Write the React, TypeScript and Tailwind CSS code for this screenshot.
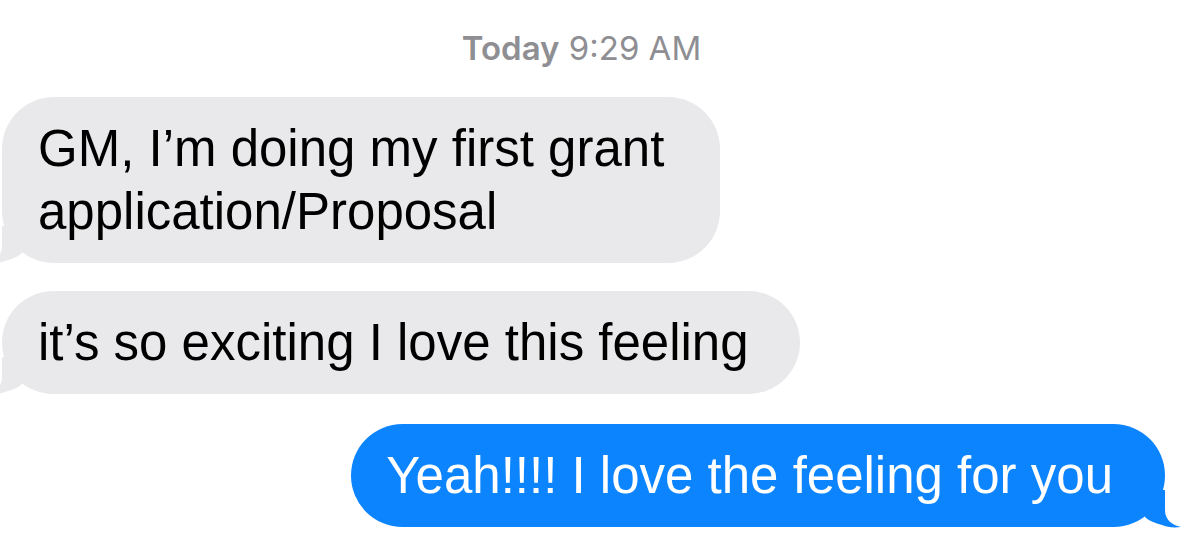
function Tail({ side, color }: { side: "left" | "right"; color: string }) {
  const pos =
    side === "right"
      ? "-right-[19px]"
      : "-left-[19px] -scale-x-100";
  return (
    <svg
      className={`absolute -bottom-[3px] h-[40px] w-[44px] ${pos}`}
      viewBox="0 0 44 40"
      aria-hidden
    >
      <path
        d="M5 0 L25 0 L25 20 C25 29 31 35 41 37 C33 38 27 37 22 35 C15 33 9 31 5 27 Z"
        fill={color}
      />
    </svg>
  );
}

function Incoming({ children, tail, wide }: { children: React.ReactNode; tail?: boolean; wide?: string }) {
  return (
    <div className="flex justify-start pl-[2px]">
      <div
        className={`relative rounded-[52px] bg-[#e9e9eb] py-[20px] pl-[36px] pr-[51px] text-[51px] leading-[63px] text-black ${wide ?? ""}`}
      >
        {children}
        {tail && <Tail side="left" color="#e9e9eb" />}
      </div>
    </div>
  );
}

export default function App() {
  return (
    <div
      className="h-[550px] w-[1185px] overflow-hidden bg-white"
      style={{ fontFamily: '"Liberation Sans", Arial, sans-serif' }}
    >
      <div className="pt-[28px] pr-[22px] text-center font-['Inter',sans-serif] text-[33px] leading-[40px] text-[#8e8e93]">
        <span className="font-semibold">Today</span> 9:29 AM
      </div>

      <div className="mt-[29px] flex flex-col">
        <Incoming tail wide="w-[718px]">
          GM, I’m doing my first grant application/Proposal
        </Incoming>
        <div className="mt-[28px]">
          <Incoming tail>it’s so exciting I love this feeling</Incoming>
        </div>
        <div className="mt-[30px] flex justify-end pr-[20px]">
          <div className="relative rounded-[52px] bg-[#0b84fe] py-[20px] pl-[35px] pr-[52px] text-[51px] leading-[63px] text-white">
            Yeah!!!! I love the feeling for you
            <Tail side="right" color="#0b84fe" />
          </div>
        </div>
      </div>
    </div>
  );
}
